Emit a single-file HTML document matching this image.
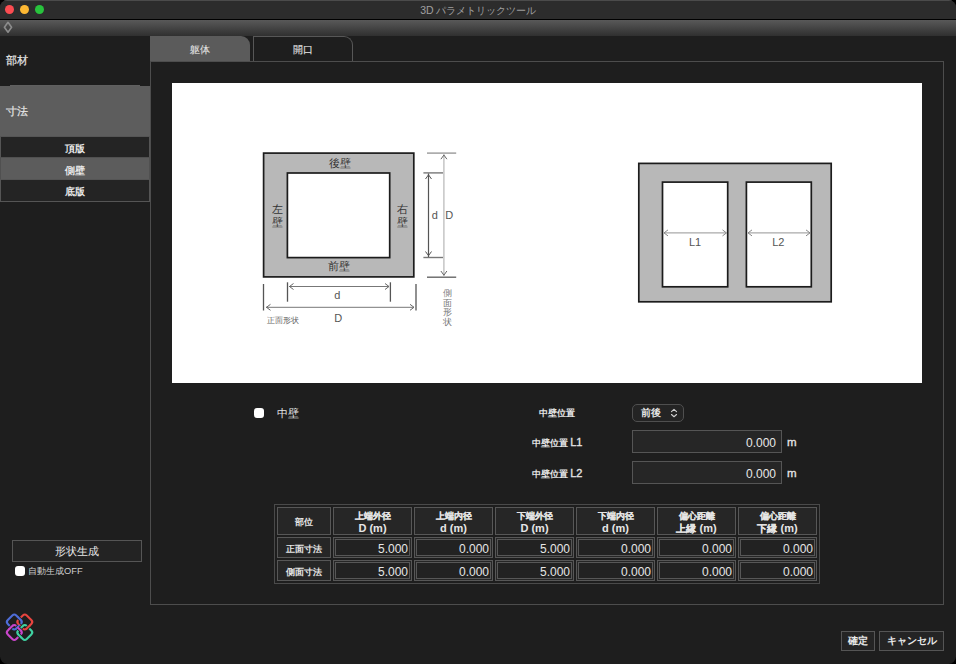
<!DOCTYPE html>
<html lang="ja">
<head>
<meta charset="utf-8">
<style>
*{box-sizing:border-box;margin:0;padding:0}
html,body{width:956px;height:664px;overflow:hidden;background:#000}
body{font-family:"Liberation Sans",sans-serif;color:#e6e6e6;position:relative}
.win{position:absolute;left:0;top:0;width:956px;height:664px;background:#1e1e1e;border-radius:7.5px 7.5px 7.5px 7.5px;overflow:hidden}
.abs{position:absolute}
.title{left:0;top:0;width:956px;height:19px;background:#2c2c2c;border-top:1px solid #4b4b4b}
.blk{left:0;top:19px;width:956px;height:1px;background:#000}
.tool{left:0;top:20px;width:956px;height:16px;background:linear-gradient(#595959,#3c3c3c 70%,#303030)}
.dot{width:9.5px;height:9.5px;border-radius:50%;top:4.75px}
.ttl{left:0;top:1.5px;width:956px;text-align:center;font-size:10.25px;color:#a0a0a0;line-height:16px}
.lbl{white-space:nowrap;line-height:1}
.btn{border:1px solid #555;background:#242424;text-align:center;font-weight:bold;font-size:10px;color:#e8e8e8}
.fld{border:1px solid #555;background:#262626;text-align:right;font-size:12px;color:#e8e8e8}
.cell{border:1px solid #575757;background:#262626;text-align:center;font-size:9px;font-weight:bold;color:#e6e6e6;white-space:nowrap}
.hl1{text-align:center;font-size:9px;font-weight:bold;line-height:10px;color:#e6e6e6;white-space:nowrap}
.hl2{text-align:center;font-size:11px;font-weight:bold;line-height:11px;color:#e6e6e6;white-space:nowrap}
.j{font-size:9.5px;-webkit-text-stroke:0.15px currentColor}
.inp{border:1px solid #575757;background:#222;text-align:right;font-size:12px;color:#e6e6e6;line-height:18px;padding-right:1px}
.hl1{-webkit-text-stroke:0.1px currentColor}
</style>
</head>
<body>
<div class="win">
  <div class="abs title"></div>
  <div class="abs ttl"><span style="font-size:10.5px;margin-right:2px">3D</span>パラメトリックツール</div>
  <div class="abs blk"></div>
  <div class="abs tool"></div>
  <div class="abs dot" style="left:4.75px;background:#fb4c51"></div>
  <div class="abs dot" style="left:19.75px;background:#fdb833"></div>
  <div class="abs dot" style="left:34.75px;background:#28c33d"></div>
  <svg class="abs" style="left:0;top:20px" width="16" height="16" viewBox="0 20 16 16">
    <path d="M8 22.3 L11.6 27.2 L8 32.2 L4.4 27.2 Z" fill="none" stroke="#8c8c8c" stroke-width="1.6" stroke-linejoin="round"/>
  </svg>

  <!-- left panel -->
  <div class="abs lbl" style="left:6px;top:55px;font-size:11px;-webkit-text-stroke:0.2px #e6e6e6">部材</div>
  <div class="abs" style="left:0;top:86px;width:150px;height:50px;background:#5d5d5d"></div>
  <div class="abs" style="left:10px;top:85px;width:130px;height:1px;background:#606060"></div>
  <div class="abs lbl" style="left:6px;top:106px;font-size:11px;-webkit-text-stroke:0.2px #e6e6e6">寸法</div>
  <div class="abs btn" style="left:0;top:136px;width:150px;height:22px;line-height:23px">頂版</div>
  <div class="abs btn" style="left:0;top:157px;width:150px;height:23px;line-height:25px;background:#5c5c5c;border-color:#505050">側壁</div>
  <div class="abs btn" style="left:0;top:179px;width:150px;height:23px;line-height:24px">底版</div>

  <div class="abs btn" style="left:12px;top:540px;width:130px;height:22px;line-height:20px;font-size:11px;font-weight:normal;background:#232323">形状生成</div>
  <div class="abs" style="left:15px;top:566px;width:10px;height:10px;border-radius:3px;background:#fff"></div>
  <div class="abs lbl" style="left:28px;top:567px;font-size:9.3px;color:#d0d0d0">自動生成OFF</div>

  <!-- tabs -->
  <div class="abs" style="left:150px;top:36px;width:100px;height:25px;background:#5b5b5b;border-radius:0 9px 0 0"></div>
  <div class="abs lbl" style="left:150px;top:45px;width:100px;text-align:center;font-size:9.5px;-webkit-text-stroke:0.12px #e0e0e0;color:#e0e0e0">躯体</div>
  <div class="abs" style="left:253px;top:36px;width:100px;height:25px;border:1px solid #575757;border-bottom:none;border-radius:0 9px 0 0;background:#1e1e1e"></div>
  <div class="abs lbl" style="left:253px;top:45px;width:100px;text-align:center;font-size:9.5px;-webkit-text-stroke:0.12px #e0e0e0;color:#e0e0e0">開口</div>

  <!-- panel -->
  <div class="abs" style="left:150px;top:61px;width:794px;height:544px;border:1px solid #4d4d4d"></div>
  <div class="abs" style="left:172px;top:83px;width:750px;height:300px;background:#fff"></div>


  <svg class="abs" style="left:172px;top:83px" width="750" height="300" viewBox="172 83 750 300">
    <g fill="none" stroke-linecap="butt">
    <rect x="263.6" y="153.1" width="150.2" height="123.8" fill="#b8b8b8" stroke="#1c1c1c" stroke-width="1.7"/>
    <rect x="287.4" y="173" width="102.3" height="84.6" fill="#fff" stroke="#1c1c1c" stroke-width="1.7"/>
    <!-- right dims -->
    <line x1="427" y1="153.1" x2="456.2" y2="153.1" stroke="#999" stroke-width="1.4"/>
    <line x1="427" y1="277.2" x2="456.2" y2="277.2" stroke="#666" stroke-width="1.4"/>
    <line x1="443.9" y1="153.5" x2="443.9" y2="276.5" stroke="#bbb" stroke-width="1.3"/>
    <path d="M440.9 159.2 L443.9 155 L446.9 159.2 M440.9 271 L443.9 275.2 L446.9 271" stroke="#666" stroke-width="1"/>
    <line x1="423.4" y1="172.9" x2="443" y2="172.9" stroke="#777" stroke-width="1.4"/>
    <line x1="423.4" y1="257.5" x2="443" y2="257.5" stroke="#777" stroke-width="1.4"/>
    <line x1="428.5" y1="173.5" x2="428.5" y2="257" stroke="#555" stroke-width="1.2"/>
    <path d="M425.5 179 L428.5 174.8 L431.5 179 M425.5 251.5 L428.5 255.7 L431.5 251.5" stroke="#555" stroke-width="1"/>
    <!-- bottom dims -->
    <line x1="263.5" y1="284" x2="263.5" y2="310.5" stroke="#555" stroke-width="1.3"/>
    <line x1="287.5" y1="282.3" x2="287.5" y2="301.7" stroke="#555" stroke-width="1.3"/>
    <line x1="390.4" y1="282.3" x2="390.4" y2="301.7" stroke="#555" stroke-width="1.3"/>
    <line x1="416" y1="284" x2="416" y2="310.5" stroke="#555" stroke-width="1.3"/>
    <line x1="289" y1="286.5" x2="389" y2="286.5" stroke="#777" stroke-width="1"/>
    <path d="M293.5 283.5 L289.5 286.5 L293.5 289.5 M385 283.5 L389 286.5 L385 289.5" stroke="#666" stroke-width="1"/>
    <line x1="266" y1="307.3" x2="414" y2="307.3" stroke="#777" stroke-width="1"/>
    <path d="M270.5 304.3 L266.5 307.3 L270.5 310.3 M410 304.3 L414 307.3 L410 310.3" stroke="#666" stroke-width="1"/>
    <!-- right diagram -->
    <rect x="638.8" y="163.4" width="192.4" height="138.4" fill="#b8b8b8" stroke="#1c1c1c" stroke-width="1.7"/>
    <rect x="662.5" y="182.1" width="65.2" height="104.7" fill="#fff" stroke="#1c1c1c" stroke-width="1.7"/>
    <rect x="746.4" y="182.1" width="64.9" height="104.7" fill="#fff" stroke="#1c1c1c" stroke-width="1.7"/>
    <line x1="664" y1="232.9" x2="726.5" y2="232.9" stroke="#aaa" stroke-width="1.2"/>
    <path d="M668 229.9 L664 232.9 L668 235.9 M722.5 229.9 L726.5 232.9 L722.5 235.9" stroke="#888" stroke-width="1"/>
    <line x1="748" y1="232.9" x2="810" y2="232.9" stroke="#aaa" stroke-width="1.2"/>
    <path d="M752 229.9 L748 232.9 L752 235.9 M806 229.9 L810 232.9 L806 235.9" stroke="#888" stroke-width="1"/>
    </g>
    <g font-family="Liberation Sans, sans-serif" fill="#333" text-anchor="middle">
    <text x="339.6" y="167" font-size="11">後壁</text>
    <text x="339" y="270" font-size="11">前壁</text>
    <text x="277.3" y="212.5" font-size="11">左</text>
    <text x="277.3" y="225.5" font-size="11">壁</text>
    <text x="402" y="212.5" font-size="11">右</text>
    <text x="402" y="225.5" font-size="11">壁</text>
    </g>
    <g font-family="Liberation Sans, sans-serif" fill="#555" text-anchor="middle">
    <text x="434.7" y="219.3" font-size="11">d</text>
    <text x="449.2" y="219.3" font-size="11">D</text>
    <text x="337.2" y="299.2" font-size="11">d</text>
    <text x="338.3" y="322" font-size="11">D</text>
    <text x="282.7" y="322.5" font-size="8" fill="#666">正面形状</text>
    <text x="447.4" y="296" font-size="9" fill="#777">側</text>
    <text x="447.4" y="305.5" font-size="9" fill="#777">面</text>
    <text x="447.4" y="315" font-size="9" fill="#777">形</text>
    <text x="447.4" y="324.5" font-size="9" fill="#777">状</text>
    <text x="695" y="245.8" font-size="11">L1</text>
    <text x="778.3" y="245.8" font-size="11">L2</text>
    </g>
  </svg>

  <!-- controls -->
  <div class="abs" style="left:254px;top:408px;width:10px;height:10px;border-radius:3px;background:#fff"></div>
  <div class="abs lbl" style="left:277px;top:408px;font-size:11px">中壁</div>

  <div class="abs lbl" style="left:507px;top:409px;width:100px;text-align:center;font-size:9px;font-weight:bold">中壁位置</div>
  <div class="abs lbl" style="left:507px;top:437px;width:100px;text-align:center;font-size:9px;font-weight:bold">中壁位置 <span style="font-size:11px;font-weight:normal;-webkit-text-stroke:0.3px #e6e6e6">L1</span></div>
  <div class="abs lbl" style="left:507px;top:468px;width:100px;text-align:center;font-size:9px;font-weight:bold">中壁位置 <span style="font-size:11px;font-weight:normal;-webkit-text-stroke:0.3px #e6e6e6">L2</span></div>

  <div class="abs" style="left:632px;top:404px;width:52px;height:18px;border:1px solid #4f4f4f;border-radius:5px;background:#242424"></div>
  <div class="abs lbl" style="left:641px;top:408px;font-size:10px;font-weight:bold">前後</div>
  <svg class="abs" style="left:668px;top:406px" width="12" height="14" viewBox="0 0 12 14">
    <path d="M3.5 5.6 L6 3.4 L8.5 5.6 M3.5 8.5 L6 10.7 L8.5 8.5" fill="none" stroke="#d0d0d0" stroke-width="1.15" stroke-linecap="round" stroke-linejoin="round"/>
  </svg>

  <div class="abs fld" style="left:632px;top:430px;width:150px;height:23px;line-height:24px;padding-right:5px">0.000</div>
  <div class="abs fld" style="left:632px;top:461px;width:150px;height:23px;line-height:24px;padding-right:5px">0.000</div>
  <div class="abs lbl" style="left:787px;top:437px;font-size:11.5px;-webkit-text-stroke:0.3px #e6e6e6">m</div>
  <div class="abs lbl" style="left:787px;top:468px;font-size:11.5px;-webkit-text-stroke:0.3px #e6e6e6">m</div>

  <div class="abs" style="left:274px;top:504px;width:546px;height:80px;border:1px solid #4a4a4a"></div>
  <div class="abs cell" style="left:277px;top:507px;width:54px;height:28px;line-height:28px">部位</div>
  <div class="abs cell" style="left:333px;top:507px;width:79px;height:28px"></div>
  <div class="abs hl1" style="left:333px;top:511px;width:79px">上端外径</div>
  <div class="abs hl2" style="left:333px;top:523px;width:79px">D (m)</div>
  <div class="abs cell" style="left:414px;top:507px;width:79px;height:28px"></div>
  <div class="abs hl1" style="left:414px;top:511px;width:79px">上端内径</div>
  <div class="abs hl2" style="left:414px;top:523px;width:79px">d (m)</div>
  <div class="abs cell" style="left:495px;top:507px;width:79px;height:28px"></div>
  <div class="abs hl1" style="left:495px;top:511px;width:79px">下端外径</div>
  <div class="abs hl2" style="left:495px;top:523px;width:79px">D (m)</div>
  <div class="abs cell" style="left:576px;top:507px;width:79px;height:28px"></div>
  <div class="abs hl1" style="left:576px;top:511px;width:79px">下端内径</div>
  <div class="abs hl2" style="left:576px;top:523px;width:79px">d (m)</div>
  <div class="abs cell" style="left:657px;top:507px;width:79px;height:28px"></div>
  <div class="abs hl1" style="left:657px;top:511px;width:79px">偏心距離</div>
  <div class="abs hl2" style="left:657px;top:523px;width:79px"><span class="j">上縁</span> (m)</div>
  <div class="abs cell" style="left:738px;top:507px;width:79px;height:28px"></div>
  <div class="abs hl1" style="left:738px;top:511px;width:79px">偏心距離</div>
  <div class="abs hl2" style="left:738px;top:523px;width:79px"><span class="j">下縁</span> (m)</div>
  <div class="abs cell" style="left:277px;top:537px;width:54px;height:21px;line-height:22px">正面寸法</div>
  <div class="abs cell" style="left:333px;top:537px;width:79px;height:21px"></div>
  <div class="abs inp" style="left:335px;top:539px;width:75px;height:17px">5.000</div>
  <div class="abs cell" style="left:414px;top:537px;width:79px;height:21px"></div>
  <div class="abs inp" style="left:416px;top:539px;width:75px;height:17px">0.000</div>
  <div class="abs cell" style="left:495px;top:537px;width:79px;height:21px"></div>
  <div class="abs inp" style="left:497px;top:539px;width:75px;height:17px">5.000</div>
  <div class="abs cell" style="left:576px;top:537px;width:79px;height:21px"></div>
  <div class="abs inp" style="left:578px;top:539px;width:75px;height:17px">0.000</div>
  <div class="abs cell" style="left:657px;top:537px;width:79px;height:21px"></div>
  <div class="abs inp" style="left:659px;top:539px;width:75px;height:17px">0.000</div>
  <div class="abs cell" style="left:738px;top:537px;width:79px;height:21px"></div>
  <div class="abs inp" style="left:740px;top:539px;width:75px;height:17px">0.000</div>
  <div class="abs cell" style="left:277px;top:560px;width:54px;height:21px;line-height:22px">側面寸法</div>
  <div class="abs cell" style="left:333px;top:560px;width:79px;height:21px"></div>
  <div class="abs inp" style="left:335px;top:562px;width:75px;height:17px">5.000</div>
  <div class="abs cell" style="left:414px;top:560px;width:79px;height:21px"></div>
  <div class="abs inp" style="left:416px;top:562px;width:75px;height:17px">0.000</div>
  <div class="abs cell" style="left:495px;top:560px;width:79px;height:21px"></div>
  <div class="abs inp" style="left:497px;top:562px;width:75px;height:17px">5.000</div>
  <div class="abs cell" style="left:576px;top:560px;width:79px;height:21px"></div>
  <div class="abs inp" style="left:578px;top:562px;width:75px;height:17px">0.000</div>
  <div class="abs cell" style="left:657px;top:560px;width:79px;height:21px"></div>
  <div class="abs inp" style="left:659px;top:562px;width:75px;height:17px">0.000</div>
  <div class="abs cell" style="left:738px;top:560px;width:79px;height:21px"></div>
  <div class="abs inp" style="left:740px;top:562px;width:75px;height:17px">0.000</div>
  <svg class="abs" style="left:0;top:605px" width="40" height="40" viewBox="0 0 40 40"><rect x="8.30" y="11.00" width="12.0" height="12.0" rx="2.8" transform="rotate(45 14.3 17)" fill="none" stroke="#4f6dd8" stroke-width="2.1"/><rect x="18.80" y="11.00" width="12.0" height="12.0" rx="2.8" transform="rotate(45 24.8 17)" fill="none" stroke="#e6443f" stroke-width="2.1"/><rect x="8.30" y="21.50" width="12.0" height="12.0" rx="2.8" transform="rotate(45 14.3 27.5)" fill="none" stroke="#c845c9" stroke-width="2.1"/><rect x="18.80" y="21.50" width="12.0" height="12.0" rx="2.8" transform="rotate(45 24.8 27.5)" fill="none" stroke="#3fd1a1" stroke-width="2.1"/><path d="M18.05 12.26 L21.05 15.26" stroke="#1e1e1e" stroke-width="3.8"/><path d="M17.45 11.66 L21.65 15.86" stroke="#4f6dd8" stroke-width="2.1"/><path d="M18.05 18.74 L21.05 21.74" stroke="#1e1e1e" stroke-width="3.8"/><path d="M17.45 18.14 L21.65 22.34" stroke="#e6443f" stroke-width="2.1"/><path d="M9.56 23.75 L12.56 20.75" stroke="#1e1e1e" stroke-width="3.8"/><path d="M8.96 24.35 L13.16 20.15" stroke="#c845c9" stroke-width="2.1"/><path d="M16.04 23.75 L19.04 20.75" stroke="#1e1e1e" stroke-width="3.8"/><path d="M15.44 24.35 L19.64 20.15" stroke="#4f6dd8" stroke-width="2.1"/><path d="M20.06 23.75 L23.06 20.75" stroke="#1e1e1e" stroke-width="3.8"/><path d="M19.46 24.35 L23.66 20.15" stroke="#3fd1a1" stroke-width="2.1"/><path d="M26.54 23.75 L29.54 20.75" stroke="#1e1e1e" stroke-width="3.8"/><path d="M25.94 24.35 L30.14 20.15" stroke="#e6443f" stroke-width="2.1"/><path d="M18.05 22.76 L21.05 25.76" stroke="#1e1e1e" stroke-width="3.8"/><path d="M17.45 22.16 L21.65 26.36" stroke="#c845c9" stroke-width="2.1"/><path d="M18.05 29.24 L21.05 32.24" stroke="#1e1e1e" stroke-width="3.8"/><path d="M17.45 28.64 L21.65 32.84" stroke="#3fd1a1" stroke-width="2.1"/></svg>

  <div class="abs btn" style="left:841px;top:631px;width:34px;height:20px;line-height:18px;font-size:10px">確定</div>
  <div class="abs btn" style="left:879px;top:631px;width:65px;height:20px;line-height:18px;font-size:10px">キャンセル</div>
</div>
</body>
</html>
